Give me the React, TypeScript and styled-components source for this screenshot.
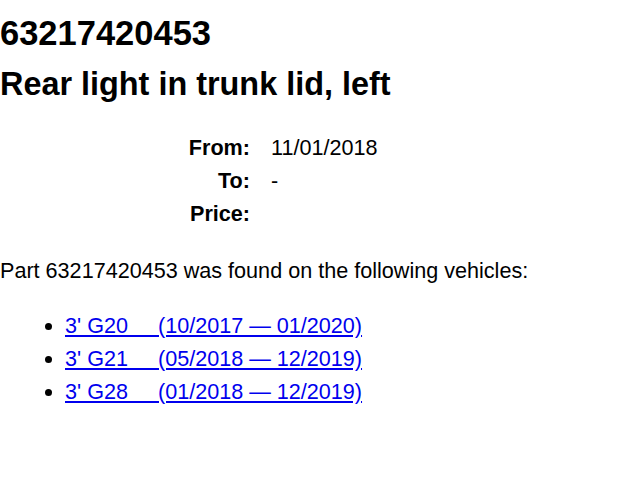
import React from "react";
import styled, { createGlobalStyle } from "styled-components";

const Global = createGlobalStyle`
  html, body { margin: 0; padding: 0; background: #fff; }
  body {
    font-family: "Liberation Sans", Arial, Helvetica, sans-serif;
    font-size: 21.6px;
    color: #000;
  }
`;

const Page = styled.div`
  padding: 14px 0 0 0;
`;

const PartNumber = styled.h1`
  margin: 0;
  font-size: 34.5px;
  font-weight: bold;
  line-height: normal;
`;

const PartName = styled.h2`
  margin: 13px 0 0 0;
  font-size: 32.4px;
  font-weight: bold;
  line-height: normal;
`;

const Details = styled.dl`
  display: grid;
  grid-template-columns: 250px auto;
  column-gap: 21px;
  row-gap: 7px;
  margin: 32px 0 0 0;
`;

const Label = styled.dt`
  font-weight: bold;
  text-align: right;
  margin: 0;
`;

const Value = styled.dd`
  margin: 0;
  min-height: 1.149em;
`;

const Intro = styled.p`
  margin: 31px 0 0 0;
`;

const VehicleList = styled.ul`
  margin: 29px 0 0 0;
  padding-left: 65px;
  list-style: disc;
`;

const VehicleItem = styled.li`
  margin-bottom: 7px;
`;

const VehicleLink = styled.a`
  color: #0000ee;
  text-decoration: underline;
  white-space: pre;
`;

const vehicles = [
  { model: "3' G20", range: "(10/2017 — 01/2020)" },
  { model: "3' G21", range: "(05/2018 — 12/2019)" },
  { model: "3' G28", range: "(01/2018 — 12/2019)" },
];

export default function App() {
  return (
    <Page>
      <Global />
      <PartNumber>63217420453</PartNumber>
      <PartName>Rear light in trunk lid, left</PartName>
      <Details>
        <Label>From:</Label>
        <Value>11/01/2018</Value>
        <Label>To:</Label>
        <Value>-</Value>
        <Label>Price:</Label>
        <Value></Value>
      </Details>
      <Intro>Part 63217420453 was found on the following vehicles:</Intro>
      <VehicleList>
        {vehicles.map((v) => (
          <VehicleItem key={v.model}>
            <VehicleLink href="#">{`${v.model}     ${v.range}`}</VehicleLink>
          </VehicleItem>
        ))}
      </VehicleList>
    </Page>
  );
}
